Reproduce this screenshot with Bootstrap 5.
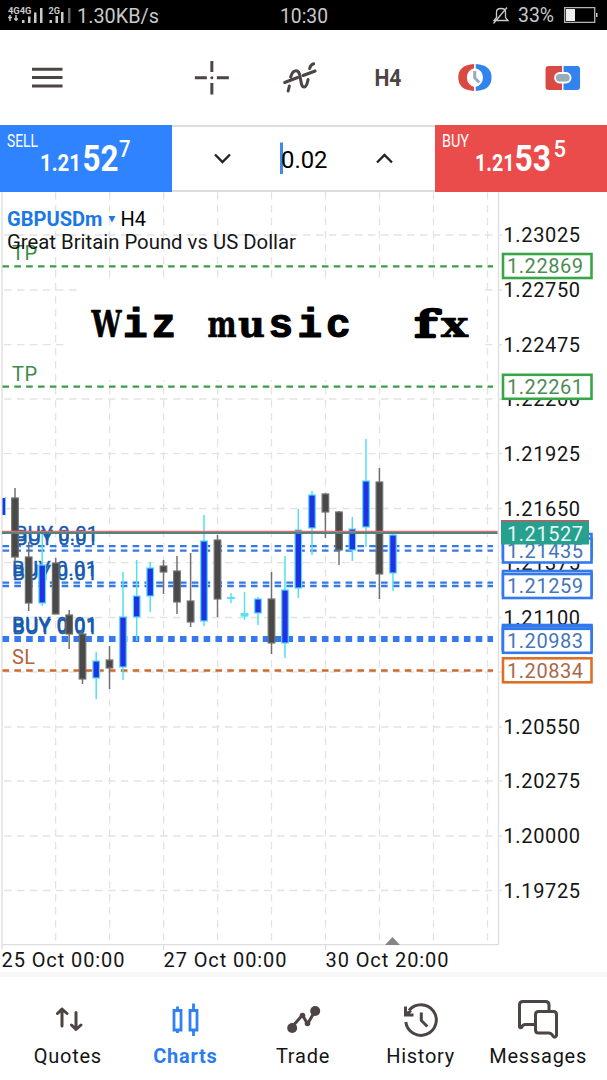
<!DOCTYPE html>
<html lang="en">
<head>
<meta charset="utf-8">
<meta name="viewport" content="width=device-width, initial-scale=1">
<title>Charts</title>
<link rel="stylesheet" href="https://cdn.jsdelivr.net/npm/bootstrap@5.3.0/dist/css/bootstrap.min.css">
<style>
body{font-family:Roboto,"Liberation Sans",sans-serif;width:607px;height:1080px;overflow:hidden;background:#fff;color:#111}
svg{display:block;flex:none}
svg text{white-space:pre}
.statusbar{height:30px;background:#000}
.toolbar{height:95px}
.tools{width:439px}
.ink{stroke:#4d4444;fill:none;stroke-width:3}
.deal{height:67px}
.deal-side{width:172px}
.sell{background:#3083ff}
.buy{background:#e94c4b}
.volume{border-top:2px solid #ddd;border-bottom:2px solid #ddd}
.axis text,.dates text{font-size:20px;fill:#151515}
.grid{stroke:#e3e3e3;stroke-width:1.3;stroke-dasharray:7.5 5.5}
.lvl{stroke-dasharray:6.6 5.23;fill:none}
.tag rect{fill:#fff;stroke-width:2.6}
.tag text{font-size:20px}
.slab{font-family:"DejaVu Serif",serif;font-size:38px;stroke-width:.7}
.slab-light{font-weight:400;stroke-width:2.6}
.bottomnav{height:108px;border-top:5px solid #f7f7f7;padding-left:9px;padding-right:10px}
.tab-label{font-size:20px;line-height:24px;letter-spacing:.75px;color:#151515}
.tab-label.on{color:#2b7cf0;font-weight:700}
</style>
</head>
<body class="d-flex flex-column">
<header class="statusbar">
<svg width="607" height="30" fill="#c9c9c9">
<g font-size="8.500" font-weight="700"><text x="8" y="14" textLength="23.500" lengthAdjust="spacingAndGlyphs">4G4G</text><text x="48.500" y="14" textLength="11.500" lengthAdjust="spacingAndGlyphs">2G</text></g>
<path d="M10 15v6M16 15v6M8 17.500h4M14 19h4" stroke="#c9c9c9" stroke-width="1.5"/>
<path d="M22 20h2.500v3H22zM28 16.500h2.500V23H28zM34 12.500h2.500V23H34zM40 8h2.500v15H40zM49.500 20h2.500v3h-2.500zM55.500 16h2.500v7h-2.500zM61 12h2.500v11H61z"/><path d="M68 8h2.500v15H68z" fill="#666"/>
<text x="77" y="22.500" font-size="21" textLength="82" lengthAdjust="spacingAndGlyphs">1.30KB/s</text>
<text x="280" y="22.500" font-size="21" textLength="48" lengthAdjust="spacingAndGlyphs">10:30</text>
<path d="M494 20.500h14l-2.500-3V12q0-3.500-4.500-3.500T496.500 12v5.500zM493.500 23.500L507 7.500" fill="none" stroke="#c9c9c9" stroke-width="1.300"/>
<text x="518" y="22" font-size="20.500" textLength="36" lengthAdjust="spacingAndGlyphs">33%</text>
<path d="M564.700 7.700h30v14.600h-30z" fill="none" stroke="#b5b5b5" stroke-width="1.300"/><path d="M566 9h9v12h-9z" fill="#eee"/><path d="M596 13h1.500v4H596z"/>
</svg>
</header>
<nav class="toolbar d-flex align-items-center justify-content-between">
<svg width="70" height="95"><path class="ink" d="M32 39.300h30.500M32 47.500h30.500M32 56h30.500"/></svg>
<div class="tools d-flex">
<svg class="flex-fill" width="87" height="95" viewBox="168.700 30 87.700 95"><path class="ink" d="M195.500 77.700h12M217.500 77.700h12M212.500 61v11M212.500 83v11.500"/><circle cx="212.500" cy="77.700" r="1.500" fill="#4d4444"/></svg>
<svg class="flex-fill" width="87" height="95" viewBox="257.400 30 87.700 95"><path class="ink" stroke-linecap="round" d="M289.500 91l1.200-5M292 77C293.500 72 295 70.800 297.500 70.800C303.500 70.800 300.500 87 305.500 87C308 87 308.500 83 309.500 79.500M311 68.500Q312 64.500 315 63.800M286 82.500L299 77.500M304.500 75.500l12-4.500"/></svg>
<svg class="flex-fill" width="87" height="95" viewBox="344.100 30 87.700 95"><text x="374.500" y="85.500" font-size="24" font-weight="700" fill="#4d4444" textLength="27" lengthAdjust="spacingAndGlyphs">H4</text></svg>
<svg class="flex-fill" width="87" height="95" viewBox="431.800 30 87.700 95"><path d="M474.800 64v4.200a9.600 9.600 0 0 0 0 18.600v4.200q-15.800-1-15.800-13.500t15.800-13.500z" fill="#d94b42"/><path d="M476.500 64v4.200a9.600 9.600 0 0 1 0 18.600v4.200q15.800-1 15.800-13.500t-15.800-13.500z" fill="#3283ed"/><path d="M475.500 71v7l4.500 4.500" stroke="#9aabb8" stroke-width="3" fill="none"/></svg>
<svg class="flex-fill" width="87" height="95" viewBox="519.500 30 87.700 95"><path d="M562.500 66H549a3 3 0 0 0-3 3v18a3 3 0 0 0 3 3h13.500z" fill="#d94b42"/><path d="M564 66h13.500a3 3 0 0 1 3 3v18a3 3 0 0 1-3 3H564z" fill="#3283ed"/><rect x="555.500" y="73" width="15.500" height="9.500" rx="4.500" fill="#9aabb8" stroke="#fff" stroke-width="1.800"/></svg>
</div>
</nav>
<section class="deal d-flex">
<div class="deal-side sell"><svg width="172" height="67" fill="#fff"><text x="7" y="22" font-size="17.500" textLength="31" lengthAdjust="spacingAndGlyphs">SELL</text><g font-weight="700"><text x="40" y="45.500" font-size="24.500" textLength="41" lengthAdjust="spacingAndGlyphs">1.21</text><text x="82.500" y="45.500" font-size="37.500" textLength="36" lengthAdjust="spacingAndGlyphs">52</text></g><text x="119" y="32" font-size="24" font-weight="500" textLength="11.500" lengthAdjust="spacingAndGlyphs">7</text></svg></div>
<div class="volume flex-fill"><svg width="263" height="63" viewBox="172 127 263 63"><path d="M215 154.500l7.500 7.500 7.500-7.500M377 162.500l7.500-7.500 7.500 7.500" fill="none" stroke="#222" stroke-width="2.300"/><path d="M280 142.500h3v31.500h-3z" fill="#4287ec"/><text x="281" y="167.500" font-size="24" textLength="46.500" lengthAdjust="spacingAndGlyphs">0.02</text></svg></div>
<div class="deal-side buy"><svg width="172" height="67" fill="#fff"><text x="7" y="22" font-size="17.500" textLength="27" lengthAdjust="spacingAndGlyphs">BUY</text><g font-weight="700"><text x="40" y="45.500" font-size="24.500" textLength="39.500" lengthAdjust="spacingAndGlyphs">1.21</text><text x="79.500" y="45.500" font-size="37.500" textLength="36.500" lengthAdjust="spacingAndGlyphs">53</text></g><text x="118.500" y="32" font-size="24" font-weight="500" textLength="12.500" lengthAdjust="spacingAndGlyphs">5</text></svg></div>
</section>
<main>
<svg id="chart" width="607" height="780" viewBox="0 192 607 780">
<g id="grid"></g>
<path d="M78 283h402v97H68v-48h10z" fill="#fff"/>
<path d="M2 192v757M498.500 192v753M2 944.700h496.500M163.600 945v5M325.500 945v5" stroke="#dedede" stroke-width="1.300" fill="none"/>
<path d="M385 945l7.500-8 7.500 8z" fill="#858585"/>
<g font-size="20"><text x="12" y="260" fill="#3c8b48" textLength="25">TP</text><text x="12" y="380.500" fill="#3c8b48" textLength="25">TP</text><text x="12" y="664" fill="#b3623b" textLength="23">SL</text>
<g fill="#175bb0" stroke="#175bb0" stroke-width=".4"><text x="15" y="540.500" textLength="83">BUY 0.01</text><text x="15" y="544.500" textLength="83">BUY 0.01</text><text x="12" y="576" textLength="85">BUY 0.01</text><text x="12.500" y="579.500" textLength="85">BUY 0.01</text><text x="12" y="631.500" textLength="85">BUY 0.01</text><text x="12.500" y="634" textLength="85">BUY 0.01</text></g></g>
<g class="lvl"><path d="M2.500 266.300H493M2.500 386.600H493" stroke="#3d9c4a" stroke-width="2.200"/><path d="M2.500 546.200H493M2.500 550.600H493M2.500 582.600H493M2.500 586H493" stroke="#3679e2" stroke-width="2.300"/><path d="M2.500 639H493" stroke="#3679ee" stroke-width="6"/><path d="M2.500 670.500H493" stroke="#cc6a30" stroke-width="2.500"/></g>
<g id="candles"></g>
<path d="M2 531.500h495.500" stroke="#df6b6b" stroke-width="1.500"/><path d="M2 533h495.500" stroke="#55817f" stroke-width="2"/>
<text x="7" y="226" font-size="20.500" font-weight="700" fill="#1b78e8" textLength="95.500" lengthAdjust="spacingAndGlyphs">GBPUSDm</text><path d="M108.500 216h7l-3.500 6.500z" fill="#1b78e8"/><text x="120.500" y="226" font-size="20" textLength="25.500">H4</text>
<text x="7" y="248.500" font-size="20" fill="#151515" textLength="289" lengthAdjust="spacingAndGlyphs">Great Britain Pound vs US Dollar</text>
<g font-family="Liberation Mono, monospace" font-weight="700" font-size="41" fill="#000" stroke="#000" stroke-width="1.200" stroke-linejoin="round">
<text y="337"><tspan class="slab" x="91.500" textLength="30" lengthAdjust="spacingAndGlyphs">W</tspan><tspan x="123 151.500">iz</tspan></text>
<text y="337"><tspan class="slab" x="207.500" textLength="29" lengthAdjust="spacingAndGlyphs">m</tspan><tspan class="slab" x="238" textLength="27" lengthAdjust="spacingAndGlyphs">u</tspan><tspan x="268.500 297.500 326">sic</tspan></text>
<text y="336.500"><tspan class="slab slab-light" x="414.500" textLength="22" lengthAdjust="spacingAndGlyphs">f</tspan><tspan class="slab" x="441" textLength="27" lengthAdjust="spacingAndGlyphs">x</tspan></text></g>
<g id="axis" class="axis"></g>
<g id="tags" class="tag"></g>
<g class="dates"><text x="1.500" y="966.500" textLength="123">25 Oct 00:00</text><text x="163.500" y="966.500" textLength="123">27 Oct 00:00</text><text x="325.500" y="966.500" textLength="123">30 Oct 20:00</text></g>
</svg>
</main>
<footer class="bottomnav d-flex text-center">
<div class="col d-flex flex-column align-items-center"><svg width="80" height="67" viewBox="28.500 977 80 67"><path class="ink" stroke-linecap="round" stroke-linejoin="round" d="M62.500 1026v-17M58 1013.500l4.500-4.500 5 4.500M76.500 1012.500v16.500M72 1025l4.500 4.500 5-4.500"/></svg><span class="tab-label">Quotes</span></div>
<div class="col d-flex flex-column align-items-center"><svg width="80" height="67" viewBox="146 977 80 67"><g fill="none" stroke="#2f80f5" stroke-width="2.800"><path d="M175 1010.500h7v19.500h-7zM178.500 1006.500v4M178.500 1030v3M191 1010.500h7v19.500h-7zM194.500 1003.500v7M194.500 1030v6"/></g></svg><span class="tab-label on">Charts</span></div>
<div class="col d-flex flex-column align-items-center"><svg width="80" height="67" viewBox="263 977 80 67"><path class="ink" stroke-linejoin="round" d="M292 1027l10.500-12 5 9 7.500-13"/><circle cx="292.200" cy="1028" r="5" fill="#4d4444"/><circle cx="315.200" cy="1011" r="5" fill="#4d4444"/><circle cx="302.500" cy="1015.500" r="2.800" fill="#4d4444"/><circle cx="307.500" cy="1023.500" r="2.800" fill="#4d4444"/></svg><span class="tab-label">Trade</span></div>
<div class="col d-flex flex-column align-items-center"><svg width="80" height="67" viewBox="381 977 80 67"><path class="ink" d="M409 1010.500a15.300 15.300 0 1 1-3.200 11.500M405.500 1006.500v8.500h8M406 1014.500l5-4M421.300 1012.500v8l6 6"/></svg><span class="tab-label">History</span></div>
<div class="col d-flex flex-column align-items-center"><svg width="80" height="67" viewBox="498 977 80 67"><path class="ink" stroke-linejoin="round" d="M534 1024.500h-8.500q-3 0-4 3-1.500.8-2-.5v-22q0-3.500 3.500-3.500h22.500q3.500 0 3.500 3.500v5M538.500 1011.500h15q3 0 3 3v21q-1.500 3-3.500.5-1.500-3-4.500-3h-10q-3 0-3-3v-15.500q0-3 3-3z"/></svg><span class="tab-label">Messages</span></div>
</footer>
<script src="https://cdn.jsdelivr.net/npm/bootstrap@5.3.0/dist/js/bootstrap.bundle.min.js"></script>
<script>
const put=(id,html)=>document.getElementById(id).innerHTML=html;
const ys=[235,290,344.7,399,453.7,508.5,562.7,617.5,672,727,781,836,890.5];
const labels=['1.23025','1.22750','1.22475','1.22200','1.21925','1.21650','1.21375','1.21100','','1.20550','1.20275','1.20000','1.19725'];
const xs=[55.6,109.6,163.6,217.6,271.5,325.5,379.5,433.5,487.5];
put('grid',ys.map(y=>`<path class="grid" d="M4 ${y}H502"/>`).join('')+xs.map(x=>`<path class="grid" d="M${x} 192V944"/>`).join(''));
put('axis',ys.map((y,i)=>labels[i]?`<text x="503.500" y="${y+7.1}" textLength="76.500">${labels[i]}</text>`:'').join(''));
const green='#37a647',blue='#3179ed',orange='#dc7026';
const tag=(y,t,line,ink)=>`<rect x="503" y="${y-12}" width="88.500" height="24" stroke="${line}"/><text x="507" y="${y+7.3}" fill="${ink}" textLength="76">${t}</text>`;
put('tags',tag(266,'1.22869',green,'#4c8b55')+tag(386.8,'1.22261',green,'#4c8b55')
 +tag(546,'',blue,blue)+tag(550.5,'1.21435',blue,'#4575bd')+tag(583,'',blue,blue)+tag(586,'1.21259',blue,'#4575bd')
 +tag(637,'',blue,blue)+tag(638.5,'',blue,blue)+tag(640.8,'1.20983',blue,'#4575bd')+tag(670.3,'1.20834',orange,'#a9684a')
 +'<path d="M501 520h88v3h-88z" fill="#c65a58"/><path d="M501 521.500h88v23h-88z" fill="#26a08f"/><text x="507" y="540.500" fill="#eaf7f4" textLength="76">1.21527</text>');
// x, high, low, body top, body bottom, kind (0 down, 1 up, 2 flat)
const data=[[15,488,562,498,557,0],[28.7,542,611,557,603,0],[42.2,531,606,565,603,1],[55.7,558,614,563,614,0],[69.2,610,649,615,634,0],[82.5,633,684,634,679,0],[96.2,652,699,661,678,1],[109.5,646,689,660,668,0],[123,572,680,617,667,1],[136.7,560,641,596,617,1],[150.2,562,612,568,596,1],[163.5,560,594,566,572,0],[177,556,614,571,602,0],[190.6,553,627,601,622,0],[204,515,626,541,621,1],[217.5,535,617,540,599,0],[231,593,603,597.5,598.5,2],[244.5,592,620,613.5,616,2],[258,597,625,599,613,1],[271.5,572,654,599,643,0],[285,556,658,590,643,1],[298.3,509,598,530,588,1],[312,491,555,495,528,1],[325.4,493,538,494,512,0],[339,511,565,512,550,0],[352.3,517,561,529,550,1],[366,439,547,481,527,1],[379.4,468,599,482,574,0],[393,532,591,535,573,1]];
const fill=['#494949','#2331e5','#5be0f0'],edge=['#707070','#50dff5','#5be0f0'];
put('candles','<path d="M2.500 498h3v17h-3z" fill="#2331e5"/><path d="M5.500 497v18.500" stroke="#50dff5"/>'+data.map(([x,h,l,t,b,k])=>`<path d="M${x} ${h}V${l}" stroke="${edge[k]}" stroke-width="1.500"/><rect x="${x-3.3}" y="${t}" width="6.600" height="${b-t}" fill="${fill[k]}" stroke="${edge[k]}" stroke-width="1.200"/>`).join(''));
</script>
</body>
</html>
